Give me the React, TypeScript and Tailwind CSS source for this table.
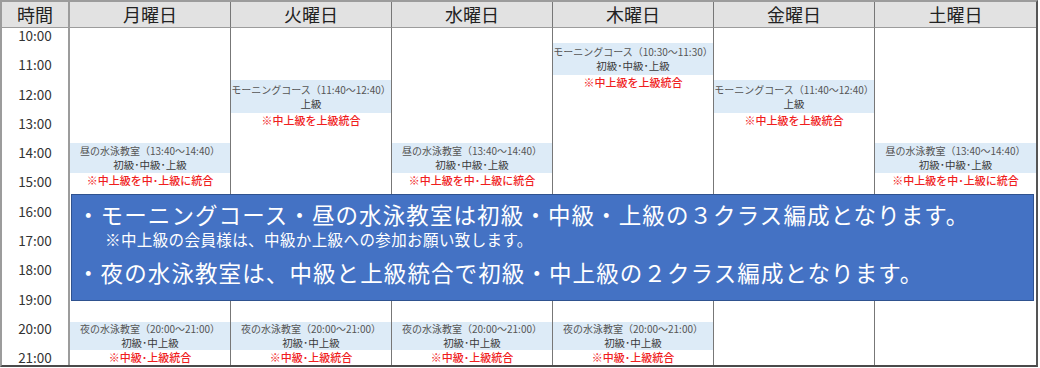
import React from 'react';

type Ev = {
  gap: number;
  title: string;
  level: string;
  note: string;
  boxH: number;
  noteH: number;
};

const JP = "font-['Noto_Sans_CJK_JP','Noto_Sans',sans-serif]";

const days: { name: string; events: Ev[] }[] = [
  {
    name: '月曜日',
    events: [
      { gap: 115, title: '昼の水泳教室（13:40～14:40）', level: '初級･中級･上級', note: '※中上級を中･上級に統合', boxH: 30, noteH: 15 },
      { gap: 134, title: '夜の水泳教室（20:00～21:00）', level: '初級･中上級', note: '※中級･上級統合', boxH: 28, noteH: 15 },
    ],
  },
  {
    name: '火曜日',
    events: [
      { gap: 52, title: 'モーニングコース（11:40～12:40）', level: '上級', note: '※中上級を上級統合', boxH: 33, noteH: 14 },
      { gap: 195, title: '夜の水泳教室（20:00～21:00）', level: '初級･中上級', note: '※中級･上級統合', boxH: 28, noteH: 15 },
    ],
  },
  {
    name: '水曜日',
    events: [
      { gap: 115, title: '昼の水泳教室（13:40～14:40）', level: '初級･中級･上級', note: '※中上級を中･上級に統合', boxH: 30, noteH: 15 },
      { gap: 134, title: '夜の水泳教室（20:00～21:00）', level: '初級･中上級', note: '※中級･上級統合', boxH: 28, noteH: 15 },
    ],
  },
  {
    name: '木曜日',
    events: [
      { gap: 15, title: 'モーニングコース（10:30～11:30）', level: '初級･中級･上級', note: '※中上級を上級統合', boxH: 32, noteH: 14 },
      { gap: 233, title: '夜の水泳教室（20:00～21:00）', level: '初級･中上級', note: '※中級･上級統合', boxH: 28, noteH: 15 },
    ],
  },
  {
    name: '金曜日',
    events: [
      { gap: 52, title: 'モーニングコース（11:40～12:40）', level: '上級', note: '※中上級を上級統合', boxH: 33, noteH: 14 },
    ],
  },
  {
    name: '土曜日',
    events: [
      { gap: 115, title: '昼の水泳教室（13:40～14:40）', level: '初級･中級･上級', note: '※中上級を中･上級に統合', boxH: 30, noteH: 15 },
    ],
  },
];

const times = ['10:00', '11:00', '12:00', '13:00', '14:00', '15:00', '16:00', '17:00', '18:00', '19:00', '20:00', '21:00'];

const EventBlock: React.FC<{ ev: Ev }> = ({ ev }) => (
  <div style={{ marginTop: ev.gap }}>
    <div className="bg-[#ddebf7] flex flex-col justify-center" style={{ height: ev.boxH }}>
      <p className="text-[10px] leading-[14px] text-[#555] text-center whitespace-nowrap">{ev.title}</p>
      <p className="text-[10.5px] leading-[14px] text-[#3a3a3a] text-center">{ev.level}</p>
    </div>
    <p className="text-[11px] font-medium text-[#f01e1e] text-center" style={{ height: ev.noteH, lineHeight: `${ev.noteH}px` }}>
      {ev.note}
    </p>
  </div>
);

export default function App() {
  return (
    <div className={`relative w-[1040px] h-[368px] bg-white ${JP}`}>
      <div className="w-[1038px] h-[367px] border-2 border-[#9c9c9c] border-r-[#555] border-b-[#4a4a4a] grid grid-cols-[68px_repeat(6,161px)] grid-rows-[26px_337px]">
        <div className="bg-[#e2e2e2] border-r-2 border-b border-[#9c9c9c] flex items-center justify-center text-[18px] text-[#222]">
          時間
        </div>
        {days.map((d, i) => (
          <div
            key={d.name}
            className={`bg-[#e2e2e2] border-b border-[#9c9c9c] flex items-center justify-center text-[18px] text-[#222] ${i < 5 ? 'border-r border-r-[#777]' : ''}`}
          >
            {d.name}
          </div>
        ))}
        <div className="border-r-2 border-[#9c9c9c] flex flex-col gap-[14.65px]">
          {times.map((t) => (
            <div key={t} className="h-[14.65px] leading-[14.65px] text-center text-[13.5px] text-[#333]">
              {t}
            </div>
          ))}
        </div>
        {days.map((d, i) => (
          <div key={d.name} className={`flex flex-col overflow-hidden ${i < 5 ? 'border-r border-[#777]' : ''}`}>
            {d.events.map((ev, j) => (
              <EventBlock key={j} ev={ev} />
            ))}
          </div>
        ))}
      </div>

      <div className="absolute left-[71px] top-[194px] w-[963px] h-[107px] bg-[#4472c4] border border-[#2f528f] text-white pl-[5px] pt-[4px]">
        <p className="text-[22.5px] leading-[30px] tracking-[1.1px] whitespace-nowrap">・モーニングコース・昼の水泳教室は初級・中級・上級の３クラス編成となります。</p>
        <p className="text-[15.5px] leading-[20px] tracking-[0.4px] pl-[28px] whitespace-nowrap">※中上級の会員様は、中級か上級への参加お願い致します。</p>
        <p className="text-[22.5px] leading-[30px] tracking-[1.1px] mt-[8px] whitespace-nowrap">・夜の水泳教室は、中級と上級統合で初級・中上級の２クラス編成となります。</p>
      </div>
    </div>
  );
}
